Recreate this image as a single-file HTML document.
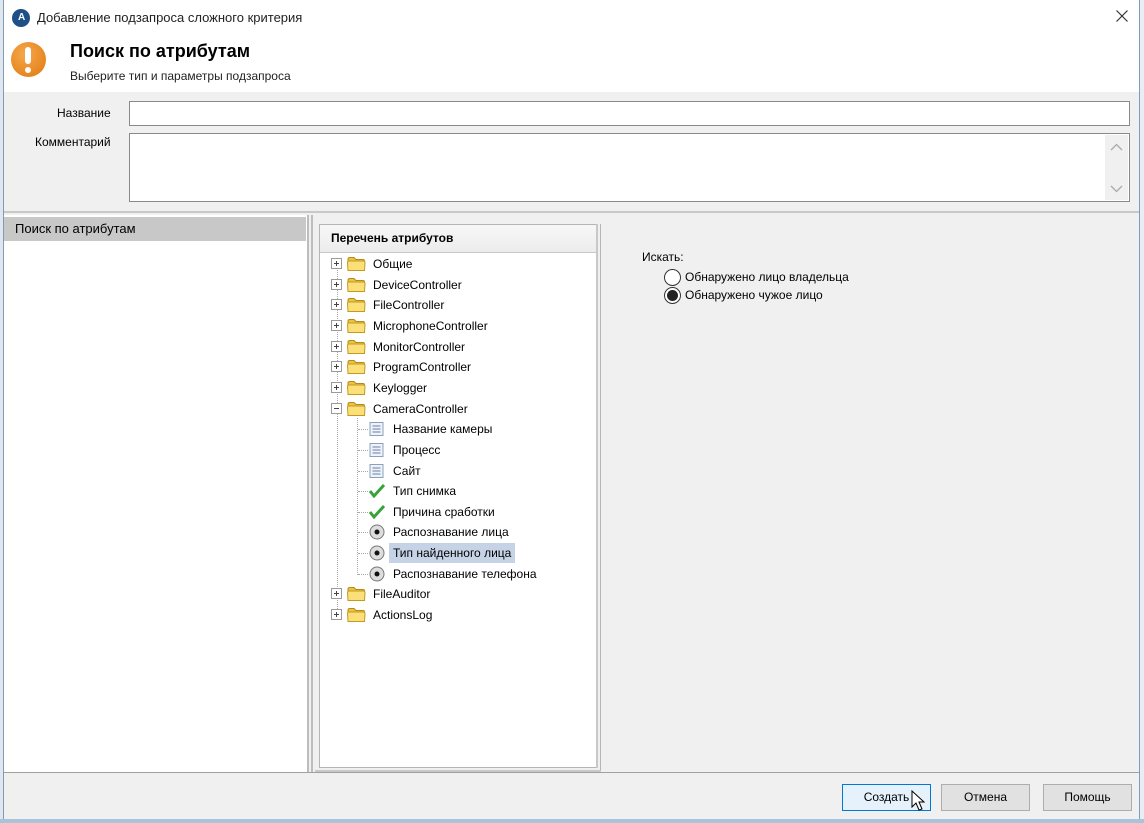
<!DOCTYPE html>
<html><head><meta charset="utf-8"><style>
*{margin:0;padding:0;box-sizing:border-box}
body{width:1144px;height:823px;overflow:hidden;background:#fff;font-family:"Liberation Sans","DejaVu Sans",sans-serif;font-size:12px;color:#000;position:relative}
.a{position:absolute}
.row{position:absolute;height:20px;line-height:20px;white-space:nowrap}
.pb{position:absolute;width:11px;height:11px;border:1px solid #9a9a9a;background:#fff;top:4px}
.pb:before{content:"";position:absolute;left:2px;top:4px;width:5px;height:1px;background:#444}
.pb.p:after{content:"";position:absolute;left:4px;top:2px;width:1px;height:5px;background:#444}
.fd{position:absolute;top:2px;width:20px;height:16px}
.btn{position:absolute;top:784px;height:27px;border:1px solid #adadad;background:#e1e1e1;text-align:center;line-height:25px;font-size:12px}
</style></head><body>
<div class="a" style="left:0;top:0;width:3px;height:823px;background:#dfe6ee"></div>
<div class="a" style="left:3px;top:0;width:1px;height:823px;background:#7f9db9"></div>
<div class="a" style="left:1139px;top:0;width:5px;height:823px;background:#e8eef4"></div>
<div class="a" style="left:1139px;top:0;width:1px;height:823px;background:#7f9db9"></div>
<div class="a" style="left:0;top:819px;width:1144px;height:4px;background:#a9c4d8"></div>
<div class="a" style="left:12px;top:9px;width:18px;height:18px;border-radius:50%;background:#1e4f86"></div>
<div class="a" style="left:18px;top:12px;color:#fff;font-size:10px;font-weight:bold">A</div>
<div class="a" style="left:37px;top:10px;font-size:13px;color:#222">Добавление подзапроса сложного критерия</div>
<svg class="a" style="left:1116px;top:10px" width="12" height="12"><path d="M0.5 0.5L11.5 11.5M11.5 0.5L0.5 11.5" stroke="#333" stroke-width="1.2"/></svg>
<div class="a" style="left:11px;top:42px;width:35px;height:35px;border-radius:50%;background:radial-gradient(circle at 40% 35%,#f6a84a,#e07810)"></div>
<div class="a" style="left:25px;top:47px;width:6px;height:17px;background:#fff;border-radius:3px"></div>
<div class="a" style="left:25px;top:67px;width:6px;height:6px;background:#fff;border-radius:50%"></div>
<div class="a" style="left:70px;top:41px;font-size:18px;font-weight:bold">Поиск по атрибутам</div>
<div class="a" style="left:70px;top:69px;font-size:12px;color:#222">Выберите тип и параметры подзапроса</div>
<div class="a" style="left:4px;top:92px;width:1135px;height:119px;background:#f0f0f0"></div>
<div class="a" style="left:57px;top:106px">Название</div>
<div class="a" style="left:35px;top:135px">Комментарий</div>
<div class="a" style="left:129px;top:101px;width:1001px;height:25px;border:1px solid #8a8a8a;background:#fff"></div>
<div class="a" style="left:129px;top:133px;width:1001px;height:69px;border:1px solid #8a8a8a;background:#fff"></div>
<div class="a" style="left:1105px;top:135px;width:23px;height:65px;background:#f0f0f0"></div>
<svg class="a" style="left:1110px;top:143px" width="13" height="50"><path d="M1 7L6.5 1.5L12 7M1 43L6.5 48.5L12 43" fill="none" stroke="#aaa" stroke-width="1.3"/></svg>
<div class="a" style="left:4px;top:211px;width:1135px;height:2px;background:#c8c8c8"></div>
<div class="a" style="left:4px;top:213px;width:1135px;height:606px;background:#f0f0f0"></div>
<div class="a" style="left:4px;top:215px;width:303px;height:557px;background:#fff"></div>
<div class="a" style="left:4px;top:217px;width:302px;height:24px;background:#c8c8c8"></div>
<div class="a" style="left:15px;top:221px;font-size:13px">Поиск по атрибутам</div>
<div class="a" style="left:307px;top:215px;width:2px;height:557px;background:#bdbdbd"></div>
<div class="a" style="left:311px;top:215px;width:2px;height:557px;background:#bdbdbd"></div>
<div class="a" style="left:315px;top:215px;width:286px;height:557px;background:#f0f0f0"></div>
<div class="a" style="left:319px;top:224px;width:278px;height:544px;border:1px solid #b5b5b5;background:#fff"></div>
<div class="a" style="left:320px;top:225px;width:276px;height:28px;background:linear-gradient(#f7f7f7,#ececec);border-bottom:1px solid #c8c8c8"></div>
<div class="a" style="left:331px;top:231px;font-weight:bold;font-size:12px">Перечень атрибутов</div>
<div class="a" style="left:596px;top:224px;width:2px;height:544px;background:#c8c8c8"></div>
<div class="a" style="left:315px;top:770px;width:286px;height:2px;background:#c8c8c8"></div>
<div class="a" style="left:600px;top:224px;width:1px;height:546px;background:#b5b5b5"></div>
<div class="a" style="left:337px;top:270px;height:347px;border-left:1px dotted #aaa"></div>
<div class="a" style="left:357px;top:418px;height:157px;border-left:1px dotted #aaa"></div>
<div id="tree"></div>
<script>
var top0=254,h=20.65;
var f=["Общие","DeviceController","FileController","MicrophoneController","MonitorController","ProgramController","Keylogger","CameraController"];
var c=[["Название камеры","l"],["Процесс","l"],["Сайт","l"],["Тип снимка","c"],["Причина сработки","c"],["Распознавание лица","r"],["Тип найденного лица","r"],["Распознавание телефона","r"]];
var s="";
function folder(y,t,p){return '<div class="row" style="left:331px;top:'+y+'px"><div class="pb '+(p?'p':'')+'" style="left:0"></div><svg class="fd" style="left:15px" viewBox="0 0 20 16"><path d="M2 3Q2 1.5 4 1.5h4l2 2h7q1.5 0 1.5 1.5v9H2z" fill="#e9c442" stroke="#b58a18"/><path d="M1.5 6.5Q1.5 5 3 5h14.5q1.5 0 1.5 1.5L18.5 14.5H2z" fill="#fbe07a" stroke="#c39a20"/></svg><span style="position:absolute;left:42px;top:0">'+t+'</span></div>';}
var i=0;
f.forEach(function(t,k){s+=folder(Math.round(top0+h*i),t,k<7);i++;});
c.forEach(function(e,k){var y=Math.round(top0+h*i);var ic="";
if(e[1]=="l")ic='<svg class="a" style="left:0;top:3px" width="15" height="14"><rect x="1" y="0.5" width="13" height="13" fill="#eef3fa" stroke="#8aa0bd"/><path d="M3.5 4h8M3.5 7h8M3.5 10h8" stroke="#6a82a8"/></svg>';
if(e[1]=="c")ic='<svg class="a" style="left:0;top:3px" width="16" height="14"><path d="M1 7l4 5L15 1" fill="none" stroke="#3aa23a" stroke-width="3"/></svg>';
if(e[1]=="r")ic='<svg class="a" style="left:0;top:2px" width="16" height="16"><circle cx="8" cy="8" r="7" fill="#ddd" stroke="#777"/><circle cx="8" cy="8" r="2.5" fill="#111"/></svg>';
var sel=k==6?'background:#c6d3e6;':'';
s+='<div class="row" style="left:357px;top:'+y+'px"><div class="a" style="left:1px;top:10px;width:10px;border-top:1px dotted #aaa"></div><div class="a" style="left:12px;top:0;width:16px;height:20px">'+ic+'</div><span style="position:absolute;left:36px;top:0;padding:0 4px;'+sel+'margin-left:-4px">'+e[0]+'</span></div>';i++;});
s+=folder(Math.round(top0+h*i),"FileAuditor",1);i++;
s+=folder(Math.round(top0+h*i),"ActionsLog",1);
document.getElementById("tree").innerHTML=s;
</script>
<div class="a" style="left:642px;top:250px;font-size:12px">Искать:</div>
<div class="a" style="left:664px;top:269px;width:17px;height:17px;border-radius:50%;border:1px solid #333;background:#fff"></div>
<div class="a" style="left:685px;top:270px">Обнаружено лицо владельца</div>
<div class="a" style="left:664px;top:287px;width:17px;height:17px;border-radius:50%;border:1px solid #333;background:#fff"></div>
<div class="a" style="left:667px;top:290px;width:11px;height:11px;border-radius:50%;background:#222"></div>
<div class="a" style="left:685px;top:288px">Обнаружено чужое лицо</div>
<div class="a" style="left:4px;top:772px;width:1135px;height:1px;background:#a0a0a0"></div>
<div class="btn" style="left:842px;width:89px;background:#e5f1fb;border-color:#0078d7">Создать</div>
<div class="btn" style="left:941px;width:89px">Отмена</div>
<div class="btn" style="left:1043px;width:89px">Помощь</div>
<svg class="a" style="left:911px;top:790px" width="14" height="22"><path d="M1 1v16l4-4 3 7 3-1-3-7h5z" fill="#fff" stroke="#000"/></svg>
</body></html>
